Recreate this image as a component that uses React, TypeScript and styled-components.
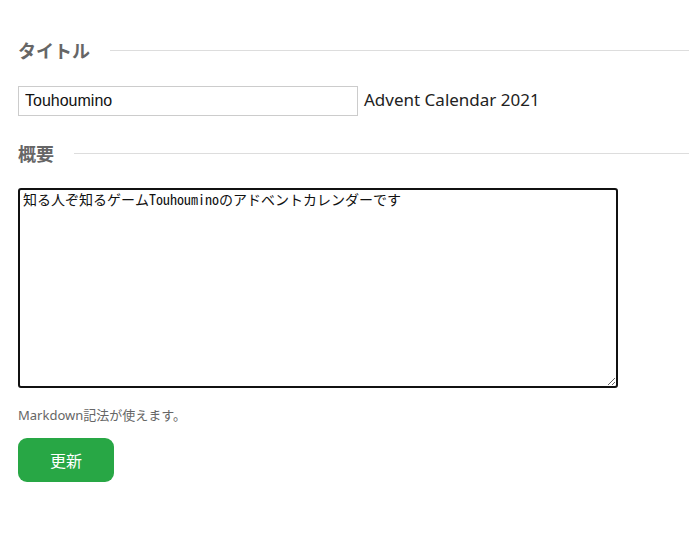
import React from "react";
import styled, { createGlobalStyle } from "styled-components";

const Global = createGlobalStyle`
  html, body { margin: 0; padding: 0; background: #fff; }
  body { font-family: "Noto Sans CJK JP", "Noto Sans", sans-serif; }
`;

const Page = styled.div`
  padding: 36px 0 0 18px;
  width: 689px;
  box-sizing: border-box;
`;

const Heading = styled.h2`
  display: flex;
  align-items: center;
  margin: 0;
  font-size: 18px;
  line-height: 28px;
  font-weight: bold;
  color: #666;
  font-family: "Noto Sans CJK JP", sans-serif;
  &::after {
    content: "";
    flex: 1;
    height: 1px;
    background: #ddd;
    margin-left: 20px;
  }
`;

const TitleRow = styled.div`
  display: flex;
  align-items: center;
  margin: 22px 0 23px;
`;

const TitleInput = styled.input`
  width: 340px;
  height: 30px;
  box-sizing: border-box;
  border: 1px solid #ccc;
  padding: 0 6px;
  font-size: 16px;
  font-family: "Liberation Sans", Arial, sans-serif;
  color: #111;
  outline: none;
`;

const Suffix = styled.span`
  margin-left: 6px;
  padding-bottom: 3px;
  font-size: 17px;
  color: #222;
  font-family: "Noto Sans", "Liberation Sans", sans-serif;
`;

const Description = styled.textarea`
  display: block;
  margin-top: 21px;
  width: 600px;
  height: 200px;
  box-sizing: border-box;
  border: 2px solid #111;
  border-radius: 3px;
  padding: 1px 3px;
  font-size: 14px;
  line-height: 17px;
  font-family: "Noto Sans Mono CJK JP", "Noto Sans CJK JP", monospace;
  color: #111;
  outline: none;
  resize: both;
`;

const Note = styled.p`
  margin: 18px 0 14px;
  font-size: 13px;
  line-height: 18px;
  color: #666;
  font-family: "Noto Sans", "Noto Sans CJK JP", sans-serif;
`;

const Submit = styled.button`
  width: 96px;
  height: 44px;
  border: none;
  border-radius: 9px;
  background: #28a745;
  color: #fff;
  font-size: 16px;
  font-family: "Noto Sans CJK JP", sans-serif;
  cursor: pointer;
`;

export default function App() {
  return (
    <>
      <Global />
      <Page>
        <Heading>タイトル</Heading>
        <TitleRow>
          <TitleInput defaultValue="Touhoumino" />
          <Suffix>Advent Calendar 2021</Suffix>
        </TitleRow>
        <Heading>概要</Heading>
        <Description defaultValue="知る人ぞ知るゲームTouhouminoのアドベントカレンダーです" />
        <Note>Markdown記法が使えます。</Note>
        <Submit>更新</Submit>
      </Page>
    </>
  );
}
